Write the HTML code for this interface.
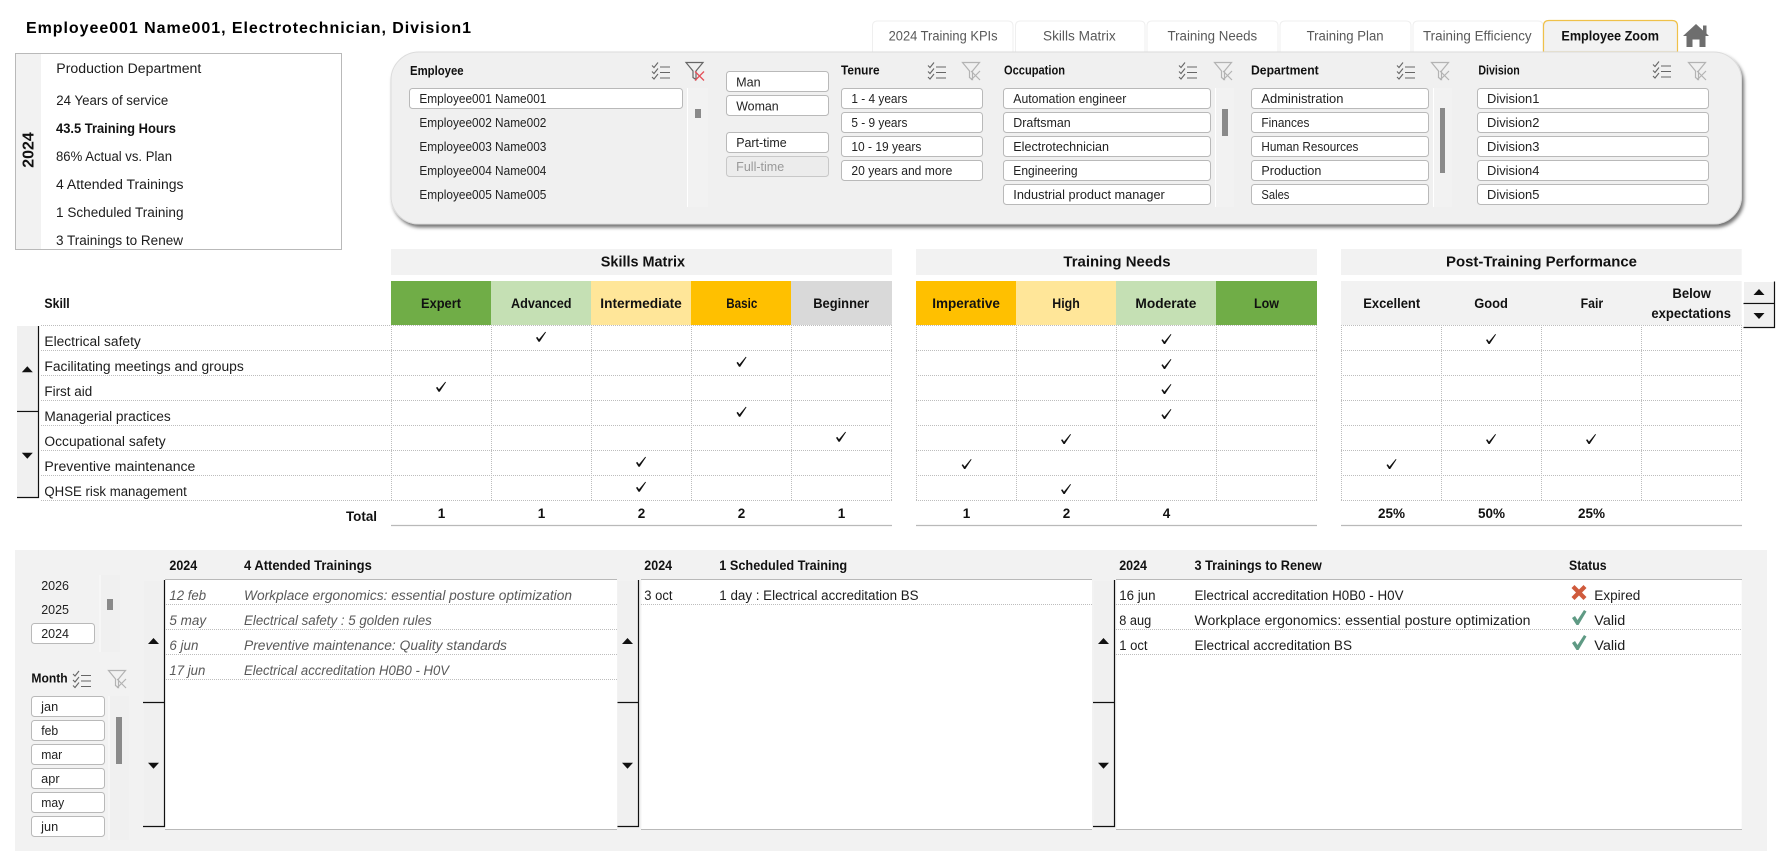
<!DOCTYPE html>
<html><head><meta charset="utf-8"><title>Employee Zoom</title>
<style>
html,body{margin:0;padding:0;background:#fff;width:1786px;height:864px;overflow:hidden}
svg{display:block;font-size:13.500px}
text{font-family:"Liberation Sans",sans-serif;fill:#1c1c1c}
.b{font-weight:bold;fill:#111}
.s{font-size:12.500px;fill:#222}
.h{font-size:12.500px;font-weight:bold;fill:#111}
.t{font-size:13.500px;fill:#595959}
.i{font-style:italic;fill:#595959}
.c{text-anchor:middle}
.w{fill:#fff;stroke:#b9b9b9;stroke-width:1}
</style></head><body>
<svg xmlns="http://www.w3.org/2000/svg" width="1786" height="864" viewBox="0 0 1786 864">
<defs>
<filter id="sh" x="-5%" y="-10%" width="110%" height="125%"><feDropShadow dx="2" dy="3" stdDeviation="1.800" flood-color="#000" flood-opacity=".55"/></filter>
<g id="ms" fill="none" stroke="#666" stroke-width="1.100"><path d="M0 3.500l2 2 4-5M0 9.500l2 2 4-5M0 15l2 2 4-5"/><path d="M8 5h10M8 10.500h10M8 16h10"/></g>
<g id="fg" fill="none" stroke="#b3b3b3" stroke-width="1.200"><path d="M.5 .5h17l-7 8.500v8.500l-3-2v-6.500z"/><path d="M9 9l9 9M18 9l-9 9"/></g>
<g id="fr" fill="none"><path d="M.5 .5h17l-7 8.500v8.500l-3-2v-6.500z" stroke="#666" stroke-width="1.200"/><path d="M9.500 9.500l9 9M18.500 9.500l-9 9" stroke="#e4505a" stroke-width="1.300"/></g>
<path id="ck" fill="#111" d="M-5 1L-3.700 .2-2 2.600 4.300-5 5-4.500-1.300 5-2.500 5z"/>
<path id="up" fill="#111" d="M-5.500 3L0-3 5.500 3z"/>
<path id="dn" fill="#111" d="M-5.500-3L5.500-3 0 3z"/>
<path id="gk" fill="#5f9a84" d="M0 8L3 6 5.500 10 12 0 14.500 1.500 6.500 15 4.500 15z"/>
</defs>

<!-- title -->
<text class="b" x="26" y="33" style="font-size:16px;fill:#000" textLength="445">Employee001 Name001, Electrotechnician, Division1</text>

<!-- left info box -->
<rect x="15.500" y="53.500" width="326" height="196" fill="#fff" stroke="#b9b9b9"/>
<rect x="16" y="54" width="25" height="195" fill="#f2f2f2"/>
<text class="b" transform="translate(33.500,150) rotate(-90)" text-anchor="middle" style="font-size:16px">2024</text>
<g>
<text x="56.300" y="73" textLength="145" lengthAdjust="spacingAndGlyphs">Production Department</text>
<text x="56.300" y="105" textLength="112" lengthAdjust="spacingAndGlyphs">24 Years of service</text>
<text class="b" x="56" y="133" textLength="120" lengthAdjust="spacingAndGlyphs">43.5 Training  Hours</text>
<text x="56" y="161" textLength="116" lengthAdjust="spacingAndGlyphs">86% Actual vs. Plan</text>
<text x="56" y="189" textLength="127.500" lengthAdjust="spacingAndGlyphs">4 Attended Trainings</text>
<text x="56" y="217" textLength="127.500" lengthAdjust="spacingAndGlyphs">1 Scheduled Training</text>
<text x="56" y="245" textLength="127" lengthAdjust="spacingAndGlyphs">3 Trainings to Renew</text>
</g>

<!-- tabs -->
<g fill="#fff" stroke="#efefef">
<path d="M872.500 54V26q0-5 5-5H1008q5 0 5 5v28z"/>
<path d="M1015.500 54V26q0-5 5-5H1140q5 0 5 5v28z"/>
<path d="M1147 54V26q0-5 5-5H1273q5 0 5 5v28z"/>
<path d="M1280 54V26q0-5 5-5H1406q5 0 5 5v28z"/>
<path d="M1413 54V26q0-5 5-5H1538q5 0 5 5v28z"/>
</g>
<path d="M1543.500 52V26q0-5.500 5.500-5.500H1672q5.500 0 5.500 5.500v26z" fill="#f2f2f2" stroke="#efc14a" stroke-width="1.200"/>
<text class="t" x="888.600" y="40.500" textLength="109" lengthAdjust="spacingAndGlyphs">2024 Training KPIs</text>
<text class="t" x="1043" y="40.500" textLength="72.700" lengthAdjust="spacingAndGlyphs">Skills Matrix</text>
<text class="t" x="1167.500" y="40.500" textLength="89.700" lengthAdjust="spacingAndGlyphs">Training Needs</text>
<text class="t" x="1306.600" y="40.500" textLength="77" lengthAdjust="spacingAndGlyphs">Training Plan</text>
<text class="t" x="1423" y="40.500" textLength="108.600" lengthAdjust="spacingAndGlyphs">Training Efficiency</text>
<text class="b" x="1561.400" y="40.500" textLength="97.600" lengthAdjust="spacingAndGlyphs">Employee Zoom</text>
<path fill="#6e6e6e" d="M1696 24L1703 30.500V25.500H1706.500V33.500L1709 36H1705.500V47H1699.500V39.500H1692.500V47H1686.500V36H1683z"/>

<!-- filter panel -->
<rect x="391" y="52" width="1350.500" height="172" rx="28" ry="28" fill="#f0f0f0" stroke="#dcdcdc" filter="url(#sh)"/>

<!-- employee -->
<text class="h" x="410" y="75" textLength="53.600" lengthAdjust="spacingAndGlyphs">Employee</text>
<use href="#ms" x="652" y="62"/><use href="#fr" x="685.500" y="62"/>
<rect class="w" x="409.500" y="88.500" width="273" height="20" rx="3"/>
<g class="s">
<text class="s" x="419.400" y="103" textLength="127" lengthAdjust="spacingAndGlyphs">Employee001 Name001</text>
<text class="s" x="419.400" y="127" textLength="127" lengthAdjust="spacingAndGlyphs">Employee002 Name002</text>
<text class="s" x="419.400" y="151" textLength="127" lengthAdjust="spacingAndGlyphs">Employee003 Name003</text>
<text class="s" x="419.400" y="175" textLength="127" lengthAdjust="spacingAndGlyphs">Employee004 Name004</text>
<text class="s" x="419.400" y="199" textLength="127" lengthAdjust="spacingAndGlyphs">Employee005 Name005</text>
</g>
<rect x="687" y="88" width="21" height="119" fill="#f2f2f2"/><rect x="687" y="88" width="1" height="119" fill="#fff"/>
<rect x="695" y="109" width="6" height="9" fill="#8a8a8a"/>

<!-- gender / contract -->
<rect class="w" x="726.500" y="71.500" width="102" height="20" rx="3"/>
<rect class="w" x="726.500" y="95.500" width="102" height="20" rx="3"/>
<rect class="w" x="726.500" y="132.500" width="102" height="20" rx="3"/>
<rect x="726.500" y="156.500" width="102" height="20" rx="3" fill="#ececec" stroke="#c8c8c8"/>
<text class="s" x="736.200" y="86.500" textLength="24.500" lengthAdjust="spacingAndGlyphs">Man</text>
<text class="s" x="736.200" y="110.500" textLength="42.500" lengthAdjust="spacingAndGlyphs">Woman</text>
<text class="s" x="736.200" y="147" textLength="50.500" lengthAdjust="spacingAndGlyphs">Part-time</text>
<text class="s" x="736.200" y="171" textLength="48" lengthAdjust="spacingAndGlyphs" style="fill:#999">Full-time</text>

<!-- tenure -->
<text class="h" x="841" y="74.500" textLength="38.600" lengthAdjust="spacingAndGlyphs">Tenure</text>
<use href="#ms" x="928" y="62"/><use href="#fg" x="962" y="62"/>
<rect class="w" x="841.500" y="88.500" width="141" height="20" rx="3"/>
<rect class="w" x="841.500" y="112.500" width="141" height="20" rx="3"/>
<rect class="w" x="841.500" y="136.500" width="141" height="20" rx="3"/>
<rect class="w" x="841.500" y="160.500" width="141" height="20" rx="3"/>
<text class="s" x="851.400" y="103" textLength="56" lengthAdjust="spacingAndGlyphs">1 - 4 years</text>
<text class="s" x="851.400" y="127" textLength="56" lengthAdjust="spacingAndGlyphs">5 - 9 years</text>
<text class="s" x="851.400" y="151" textLength="70" lengthAdjust="spacingAndGlyphs">10 - 19 years</text>
<text class="s" x="851.400" y="175" textLength="101" lengthAdjust="spacingAndGlyphs">20 years and more</text>

<!-- occupation -->
<text class="h" x="1004" y="74.500" textLength="61" lengthAdjust="spacingAndGlyphs">Occupation</text>
<use href="#ms" x="1179" y="62"/><use href="#fg" x="1214" y="62"/>
<rect class="w" x="1003.500" y="88.500" width="207" height="20" rx="3"/>
<rect class="w" x="1003.500" y="112.500" width="207" height="20" rx="3"/>
<rect class="w" x="1003.500" y="136.500" width="207" height="20" rx="3"/>
<rect class="w" x="1003.500" y="160.500" width="207" height="20" rx="3"/>
<rect class="w" x="1003.500" y="184.500" width="207" height="20" rx="3"/>
<text class="s" x="1013.300" y="103" textLength="113" lengthAdjust="spacingAndGlyphs">Automation engineer</text>
<text class="s" x="1013.300" y="127" textLength="57.400" lengthAdjust="spacingAndGlyphs">Draftsman</text>
<text class="s" x="1013.300" y="151" textLength="95.700" lengthAdjust="spacingAndGlyphs">Electrotechnician</text>
<text class="s" x="1013.300" y="175" textLength="64.300" lengthAdjust="spacingAndGlyphs">Engineering</text>
<text class="s" x="1013.300" y="199" textLength="151.500" lengthAdjust="spacingAndGlyphs">Industrial product manager</text>
<rect x="1215" y="88" width="19" height="119" fill="#f2f2f2"/><rect x="1215" y="88" width="1" height="119" fill="#fff"/>
<rect x="1222" y="109" width="6" height="27" fill="#8a8a8a"/>

<!-- department -->
<text class="h" x="1251" y="74.500" textLength="67.700" lengthAdjust="spacingAndGlyphs">Department</text>
<use href="#ms" x="1397" y="62"/><use href="#fg" x="1431" y="62"/>
<rect class="w" x="1251.500" y="88.500" width="177" height="20" rx="3"/>
<rect class="w" x="1251.500" y="112.500" width="177" height="20" rx="3"/>
<rect class="w" x="1251.500" y="136.500" width="177" height="20" rx="3"/>
<rect class="w" x="1251.500" y="160.500" width="177" height="20" rx="3"/>
<rect class="w" x="1251.500" y="184.500" width="177" height="20" rx="3"/>
<text class="s" x="1261.400" y="103" textLength="82" lengthAdjust="spacingAndGlyphs">Administration</text>
<text class="s" x="1261.400" y="127" textLength="48" lengthAdjust="spacingAndGlyphs">Finances</text>
<text class="s" x="1261.400" y="151" textLength="97" lengthAdjust="spacingAndGlyphs">Human Resources</text>
<text class="s" x="1261.400" y="175" textLength="60" lengthAdjust="spacingAndGlyphs">Production</text>
<text class="s" x="1261.400" y="199" textLength="28" lengthAdjust="spacingAndGlyphs">Sales</text>
<rect x="1433" y="88" width="19" height="119" fill="#f2f2f2"/><rect x="1433" y="88" width="1" height="119" fill="#fff"/>
<rect x="1440" y="108" width="5" height="65" fill="#8a8a8a"/>

<!-- division -->
<text class="h" x="1478.400" y="74.500" textLength="41.300" lengthAdjust="spacingAndGlyphs">Division</text>
<use href="#ms" x="1653" y="61"/><use href="#fg" x="1688" y="62"/>
<rect class="w" x="1477.500" y="88.500" width="231" height="20" rx="3"/>
<rect class="w" x="1477.500" y="112.500" width="231" height="20" rx="3"/>
<rect class="w" x="1477.500" y="136.500" width="231" height="20" rx="3"/>
<rect class="w" x="1477.500" y="160.500" width="231" height="20" rx="3"/>
<rect class="w" x="1477.500" y="184.500" width="231" height="20" rx="3"/>
<text class="s" x="1487" y="103" textLength="52.400" lengthAdjust="spacingAndGlyphs">Division1</text>
<text class="s" x="1487" y="127" textLength="52.400" lengthAdjust="spacingAndGlyphs">Division2</text>
<text class="s" x="1487" y="151" textLength="52.400" lengthAdjust="spacingAndGlyphs">Division3</text>
<text class="s" x="1487" y="175" textLength="52.400" lengthAdjust="spacingAndGlyphs">Division4</text>
<text class="s" x="1487" y="199" textLength="52.400" lengthAdjust="spacingAndGlyphs">Division5</text>

<!-- section titles -->
<rect x="391" y="249" width="501" height="26" fill="#f2f2f2"/>
<rect x="916" y="249" width="401" height="26" fill="#f2f2f2"/>
<rect x="1341" y="249" width="400.700" height="26" fill="#f2f2f2"/>
<g style="font-size:15px">
<text class="b" x="600.800" y="266.500" textLength="84.200" lengthAdjust="spacingAndGlyphs">Skills Matrix</text>
<text class="b" x="1063.400" y="266.500" textLength="107.200" lengthAdjust="spacingAndGlyphs">Training Needs</text>
<text class="b" x="1446" y="266.500" textLength="191" lengthAdjust="spacingAndGlyphs">Post-Training Performance</text>
</g>

<!-- header cells -->
<rect x="391" y="281" width="100" height="44" fill="#70ad47"/>
<rect x="491" y="281" width="100" height="44" fill="#c5e0b4"/>
<rect x="591" y="281" width="100" height="44" fill="#ffe699"/>
<rect x="691" y="281" width="100" height="44" fill="#ffc000"/>
<rect x="791" y="281" width="101" height="44" fill="#d9d9d9"/>
<rect x="916" y="281" width="100" height="44" fill="#ffc000"/>
<rect x="1016" y="281" width="100" height="44" fill="#ffe699"/>
<rect x="1116" y="281" width="100" height="44" fill="#c5e0b4"/>
<rect x="1216" y="281" width="101" height="44" fill="#70ad47"/>
<rect x="1341" y="281" width="400.700" height="44" fill="#f2f2f2"/>

<text class="b" x="44.400" y="308" textLength="25.300" lengthAdjust="spacingAndGlyphs">Skill</text>
<text class="b" x="421" y="308" textLength="40" lengthAdjust="spacingAndGlyphs">Expert</text>
<text class="b" x="511" y="308" textLength="60.500" lengthAdjust="spacingAndGlyphs">Advanced</text>
<text class="b" x="600.300" y="308" textLength="81.500" lengthAdjust="spacingAndGlyphs">Intermediate</text>
<text class="b" x="726.300" y="308" textLength="31" lengthAdjust="spacingAndGlyphs">Basic</text>
<text class="b" x="813.200" y="308" textLength="56" lengthAdjust="spacingAndGlyphs">Beginner</text>
<text class="b" x="932.200" y="308" textLength="67.700" lengthAdjust="spacingAndGlyphs">Imperative</text>
<text class="b" x="1052.300" y="308" textLength="27.500" lengthAdjust="spacingAndGlyphs">High</text>
<text class="b" x="1135.400" y="308" textLength="61" lengthAdjust="spacingAndGlyphs">Moderate</text>
<text class="b" x="1254" y="308" textLength="25" lengthAdjust="spacingAndGlyphs">Low</text>
<text class="b" x="1363.200" y="308" textLength="57" lengthAdjust="spacingAndGlyphs">Excellent</text>
<text class="b" x="1474.200" y="308" textLength="33.700" lengthAdjust="spacingAndGlyphs">Good</text>
<text class="b" x="1580.600" y="308" textLength="22.600" lengthAdjust="spacingAndGlyphs">Fair</text>
<text class="b" x="1672.400" y="298" textLength="38.600" lengthAdjust="spacingAndGlyphs">Below</text>
<text class="b" x="1651.400" y="318" textLength="79.600" lengthAdjust="spacingAndGlyphs">expectations</text>

<!-- grid -->
<path fill="none" stroke="#bdbdbd" stroke-dasharray="1 1" d="M41 325.500H892M916 325.500H1317M1341 325.500H1742M41 350.500H892M916 350.500H1317M1341 350.500H1742M41 375.500H892M916 375.500H1317M1341 375.500H1742M41 400.500H892M916 400.500H1317M1341 400.500H1742M41 425.500H892M916 425.500H1317M1341 425.500H1742M41 450.500H892M916 450.500H1317M1341 450.500H1742M41 475.500H892M916 475.500H1317M1341 475.500H1742M41 500.500H892M916 500.500H1317M1341 500.500H1742M391.500 325V500M491.500 325V500M591.500 325V500M691.500 325V500M791.500 325V500M891.500 325V500M916.500 325V500M1016.500 325V500M1116.500 325V500M1216.500 325V500M1316.500 325V500M1341.500 325V500M1441.500 325V500M1541.500 325V500M1641.500 325V500M1741.500 325V500"/>
<path fill="none" stroke="#b9b9b9" stroke-width="1.200" d="M391 525.500H892M916 525.500H1317M1341 525.500H1742"/>

<!-- skills -->
<text x="44.400" y="346" textLength="96.400" lengthAdjust="spacingAndGlyphs">Electrical safety</text>
<text x="44.400" y="371" textLength="199.400" lengthAdjust="spacingAndGlyphs">Facilitating meetings and groups</text>
<text x="44.400" y="396" textLength="47.800" lengthAdjust="spacingAndGlyphs">First aid</text>
<text x="44.400" y="421" textLength="126.300" lengthAdjust="spacingAndGlyphs">Managerial practices</text>
<text x="44.400" y="446" textLength="121.300" lengthAdjust="spacingAndGlyphs">Occupational safety</text>
<text x="44.400" y="471" textLength="151" lengthAdjust="spacingAndGlyphs">Preventive maintenance</text>
<text x="44.400" y="496" textLength="142.400" lengthAdjust="spacingAndGlyphs">QHSE risk management</text>

<!-- checks -->
<use href="#ck" x="541" y="336.700"/><use href="#ck" x="441" y="386.700"/>
<use href="#ck" x="741.500" y="361.700"/><use href="#ck" x="741.500" y="411.700"/>
<use href="#ck" x="841" y="436.700"/><use href="#ck" x="641" y="461.700"/><use href="#ck" x="641" y="486.700"/>
<use href="#ck" x="1166.400" y="339"/><use href="#ck" x="1166.400" y="364"/><use href="#ck" x="1166.400" y="389"/><use href="#ck" x="1166.400" y="414"/>
<use href="#ck" x="1066" y="439"/><use href="#ck" x="966.600" y="464"/><use href="#ck" x="1066" y="489"/>
<use href="#ck" x="1491" y="339"/><use href="#ck" x="1491" y="439"/><use href="#ck" x="1591" y="439"/><use href="#ck" x="1391.500" y="464"/>

<!-- totals -->
<text class="b" x="346" y="521" textLength="31" lengthAdjust="spacingAndGlyphs">Total</text>
<g text-anchor="middle">
<text class="b" x="441.500" y="518">1</text><text class="b" x="541.500" y="518">1</text><text class="b" x="641.500" y="518">2</text><text class="b" x="741.500" y="518">2</text><text class="b" x="841.500" y="518">1</text>
<text class="b" x="966.500" y="518">1</text><text class="b" x="1066.500" y="518">2</text><text class="b" x="1166.500" y="518">4</text>
<text class="b" x="1391.500" y="518">25%</text><text class="b" x="1491.500" y="518">50%</text><text class="b" x="1591.500" y="518">25%</text>
</g>

<!-- skills scroll buttons -->
<rect x="17" y="326" width="21" height="85" fill="#f0f0f0"/><rect x="17" y="413" width="21" height="84" fill="#f0f0f0"/>
<path fill="none" stroke="#111" stroke-width="1.200" d="M38.500 326V411.500H17M38.500 412V497.500H17"/>
<use href="#up" x="27.300" y="369.300"/><use href="#dn" x="27.300" y="455.700"/>
<rect x="1744" y="282" width="30" height="21" fill="#f0f0f0"/><rect x="1744" y="305" width="30" height="22" fill="#f0f0f0"/>
<path fill="none" stroke="#111" stroke-width="1.200" d="M1774.500 281.500V303.500H1743.500M1774.500 304V327.500H1743.500"/>
<use href="#up" x="1759" y="292"/><use href="#dn" x="1759" y="316"/>

<!-- bottom panel -->
<rect x="15" y="550" width="1752" height="301" fill="#f2f2f2"/>

<!-- year slicer -->
<rect x="99.600" y="575" width="20" height="77" fill="#f0f0f0"/><rect x="99.600" y="575" width="1" height="77" fill="#fafafa"/>
<rect x="107" y="599" width="6" height="11" fill="#8a8a8a"/>
<rect class="w" x="31.500" y="623.500" width="63" height="20" rx="3"/>
<text class="s" x="41.200" y="590" textLength="27.800" lengthAdjust="spacingAndGlyphs">2026</text>
<text class="s" x="41.200" y="614" textLength="27.800" lengthAdjust="spacingAndGlyphs">2025</text>
<text class="s" x="41.200" y="638" textLength="27.800" lengthAdjust="spacingAndGlyphs">2024</text>

<!-- month slicer -->
<text class="h" x="31.400" y="682.700" textLength="36.300" lengthAdjust="spacingAndGlyphs">Month</text>
<use href="#ms" x="73" y="670.500"/><use href="#fg" x="108" y="670"/>
<rect class="w" x="31.500" y="696.500" width="73" height="20" rx="3"/>
<rect class="w" x="31.500" y="720.500" width="73" height="20" rx="3"/>
<rect class="w" x="31.500" y="744.500" width="73" height="20" rx="3"/>
<rect class="w" x="31.500" y="768.500" width="73" height="20" rx="3"/>
<rect class="w" x="31.500" y="792.500" width="73" height="20" rx="3"/>
<rect class="w" x="31.500" y="816.500" width="73" height="20" rx="3"/>
<text class="s" x="41.200" y="711" textLength="17" lengthAdjust="spacingAndGlyphs">jan</text>
<text class="s" x="41.200" y="735" textLength="17" lengthAdjust="spacingAndGlyphs">feb</text>
<text class="s" x="41.200" y="759" textLength="21" lengthAdjust="spacingAndGlyphs">mar</text>
<text class="s" x="41.200" y="783" textLength="18.400" lengthAdjust="spacingAndGlyphs">apr</text>
<text class="s" x="41.200" y="807" textLength="23" lengthAdjust="spacingAndGlyphs">may</text>
<text class="s" x="41.200" y="831" textLength="17" lengthAdjust="spacingAndGlyphs">jun</text>
<rect x="108.600" y="696" width="20" height="144" fill="#f0f0f0"/><rect x="108.600" y="696" width="1" height="144" fill="#fafafa"/>
<rect x="116" y="717" width="6" height="47" fill="#8a8a8a"/>

<!-- list panels -->
<rect x="165.300" y="579.500" width="451.700" height="250" fill="#fff"/>
<rect x="641.400" y="579.500" width="450.600" height="250" fill="#fff"/>
<rect x="1116.400" y="579.500" width="625.300" height="250" fill="#fff"/>
<path fill="none" stroke="#b9b9b9" stroke-width="1.100" d="M165 579.500H617M165 829.500H617M641 579.500H1092M641 829.500H1092M1116 579.500H1742M1116 829.500H1742"/>
<path fill="none" stroke="#bdbdbd" stroke-dasharray="1 1" d="M166 604.500H617M166 629.500H617M166 654.500H617M166 679.500H617M641 604.500H1092M1116 604.500H1742M1116 629.500H1742M1116 654.500H1742"/>

<!-- list scroll buttons -->
<rect x="144" y="581" width="20" height="121" fill="#f0f0f0"/><rect x="144" y="703" width="20" height="123" fill="#f0f0f0"/>
<rect x="618" y="581" width="20" height="121" fill="#f0f0f0"/><rect x="618" y="703" width="20" height="123" fill="#f0f0f0"/>
<rect x="1094" y="581" width="20" height="121" fill="#f0f0f0"/><rect x="1094" y="703" width="20" height="123" fill="#f0f0f0"/>
<path fill="none" stroke="#111" stroke-width="1.200" d="M164.500 580V702.500H143M164.500 703V826.500H143M638.500 580V702.500H617.500M638.500 703V826.500H617.500M1114.500 580V702.500H1093M1114.500 703V826.500H1093"/>
<use href="#up" x="153.500" y="641"/><use href="#dn" x="153.500" y="765.700"/>
<use href="#up" x="627.500" y="641"/><use href="#dn" x="627.500" y="765.700"/>
<use href="#up" x="1103.500" y="641"/><use href="#dn" x="1103.500" y="765.700"/>

<!-- list headers -->
<text class="b" x="169.400" y="570" textLength="27.800" lengthAdjust="spacingAndGlyphs">2024</text>
<text class="b" x="244" y="570" textLength="127.800" lengthAdjust="spacingAndGlyphs">4 Attended Trainings</text>
<text class="b" x="644.300" y="570" textLength="27.800" lengthAdjust="spacingAndGlyphs">2024</text>
<text class="b" x="719.300" y="570" textLength="127.800" lengthAdjust="spacingAndGlyphs">1 Scheduled Training</text>
<text class="b" x="1119.200" y="570" textLength="27.800" lengthAdjust="spacingAndGlyphs">2024</text>
<text class="b" x="1194.500" y="570" textLength="127.300" lengthAdjust="spacingAndGlyphs">3 Trainings to Renew</text>
<text class="b" x="1569" y="570" textLength="37.600" lengthAdjust="spacingAndGlyphs">Status</text>

<!-- list rows -->
<text class="i" x="169.400" y="600" textLength="36.700" lengthAdjust="spacingAndGlyphs">12 feb</text>
<text class="i" x="169.400" y="625" textLength="36.700" lengthAdjust="spacingAndGlyphs">5 may</text>
<text class="i" x="169.400" y="650" textLength="29" lengthAdjust="spacingAndGlyphs">6 jun</text>
<text class="i" x="169.400" y="675" textLength="36" lengthAdjust="spacingAndGlyphs">17 jun</text>
<text class="i" x="244" y="600" textLength="328" lengthAdjust="spacingAndGlyphs">Workplace ergonomics: essential posture optimization</text>
<text class="i" x="244" y="625" textLength="187.800" lengthAdjust="spacingAndGlyphs">Electrical safety : 5 golden rules</text>
<text class="i" x="244" y="650" textLength="262.900" lengthAdjust="spacingAndGlyphs">Preventive maintenance: Quality standards</text>
<text class="i" x="244" y="675" textLength="205" lengthAdjust="spacingAndGlyphs">Electrical accreditation H0B0 - H0V</text>

<text x="644.300" y="600" textLength="28.200" lengthAdjust="spacingAndGlyphs">3 oct</text>
<text x="719.300" y="600" textLength="199.300" lengthAdjust="spacingAndGlyphs">1 day : Electrical accreditation BS</text>

<text x="1119.200" y="600" textLength="36.300" lengthAdjust="spacingAndGlyphs">16 jun</text>
<text x="1119.200" y="625" textLength="32" lengthAdjust="spacingAndGlyphs">8 aug</text>
<text x="1119.200" y="650" textLength="28.400" lengthAdjust="spacingAndGlyphs">1 oct</text>
<text x="1194.500" y="600" textLength="209" lengthAdjust="spacingAndGlyphs">Electrical accreditation H0B0 - H0V</text>
<text x="1194.500" y="625" textLength="336" lengthAdjust="spacingAndGlyphs">Workplace ergonomics: essential posture optimization</text>
<text x="1194.500" y="650" textLength="157.500" lengthAdjust="spacingAndGlyphs">Electrical accreditation BS</text>
<path fill="#cf5a3c" d="M1571.500 588L1574.500 585 1579 589.500 1583.500 585 1586.500 588 1582 592.500 1586.500 597 1583.500 600 1579 595.500 1574.500 600 1571.500 597 1576 592.500z"/>
<use href="#gk" x="1572" y="610"/><use href="#gk" x="1572" y="635"/>
<text x="1594.300" y="600" textLength="46" lengthAdjust="spacingAndGlyphs">Expired</text>
<text x="1594.300" y="625" textLength="31" lengthAdjust="spacingAndGlyphs">Valid</text>
<text x="1594.300" y="650" textLength="31" lengthAdjust="spacingAndGlyphs">Valid</text>
</svg>
</body></html>
